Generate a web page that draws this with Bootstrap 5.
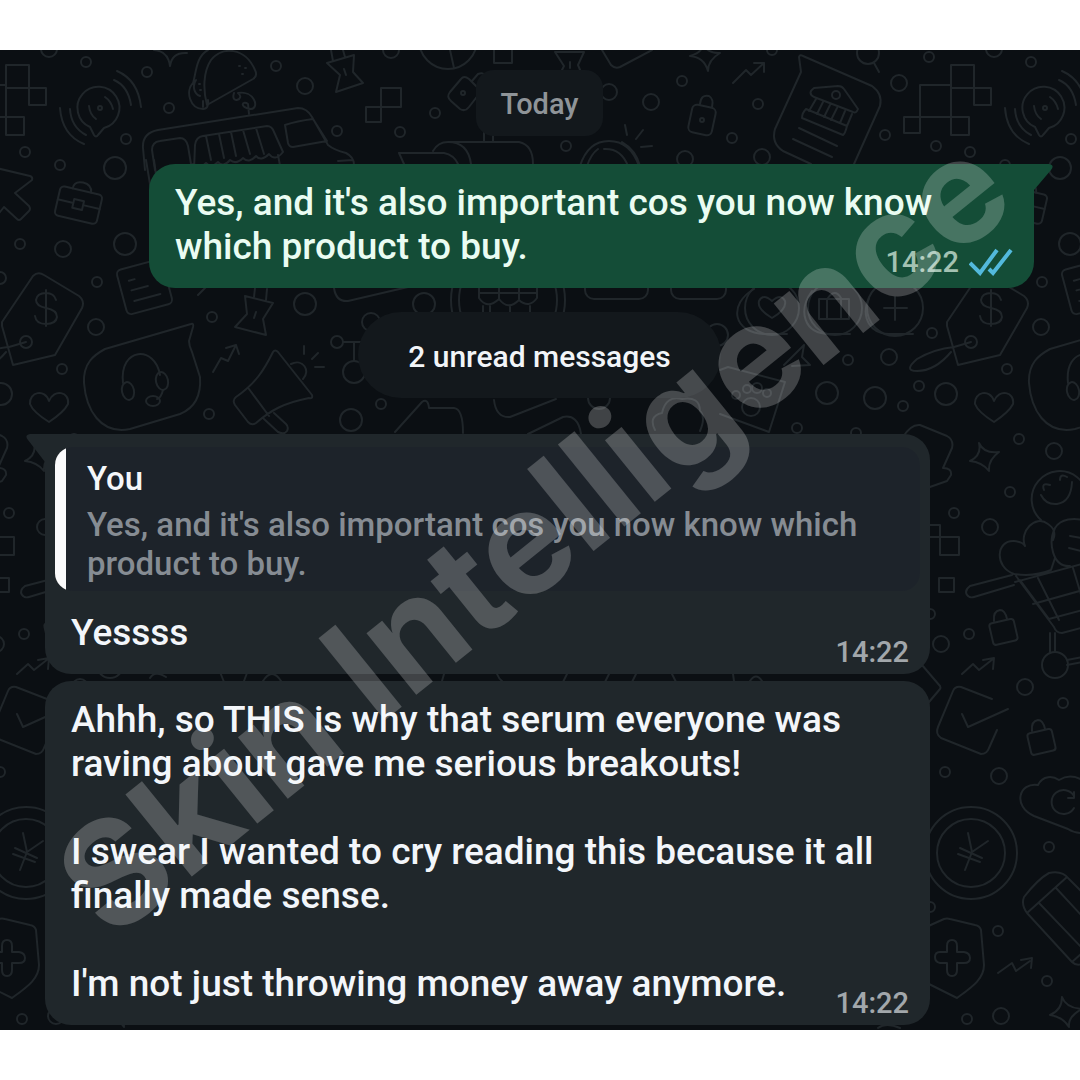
<!DOCTYPE html>
<html lang="en">
<head>
<meta charset="utf-8">
<meta name="viewport" content="width=device-width, initial-scale=1">
<title>Chat</title>
<link href="https://cdn.jsdelivr.net/npm/bootstrap@5.3.0/dist/css/bootstrap.min.css" rel="stylesheet">
<style>
body{background:#fff;font-family:Roboto,"Liberation Sans",sans-serif;font-weight:500}
.chat{background:#0b0f13;margin:50px 0;padding:20px 46px 5px 45px;overflow:hidden}
.wallpaper,.watermark{inset:0;width:100%;height:100%;pointer-events:none}
.wallpaper{fill:none;stroke:#20262a;stroke-width:2;stroke-linecap:round;stroke-linejoin:round}
.watermark text{font-family:Inter,sans-serif;font-weight:700;font-size:145px;fill:#fff;fill-opacity:.22}
.thread{z-index:1}
.day{background:#13181c;color:#8f9498;font-size:29px;line-height:32px;padding:18px 24px 16px;border-radius:18px;margin-bottom:28px}
.unread{background:#13181c;color:#f2f5f8;font-size:30px;line-height:36px;padding:27px 50px 23px;border-radius:43px;margin:24px 0 36px}
.bubble{width:calc(100% - 104px);border-radius:26px;color:#f3f6fa;font-size:37px;line-height:44px;background:#20272b}
.bubble p{margin:0 0 44px}
.bubble p:last-of-type{margin:0}
.bubble time{font-size:29px;line-height:32px;color:#a2a7ab;right:21px;bottom:6px}
.sent{background:#144d37;color:#eafcf2;padding:17px 26px 19px;border-top-right-radius:0}
.sent time{color:#a3c2b2;bottom:10px;gap:10px}
.quoted{padding:13px 10px 19px;border-top-left-radius:0;margin-bottom:7px}
.plain{padding:17px 26px 19px}
.tail{top:0;width:20px;height:34px}
.sent .tail{left:100%;fill:#144d37}
.quoted .tail{right:100%;fill:#20272b}
.quote{background:linear-gradient(to right,#fbfbfc 11px,#1d232a 11px);border-radius:18px;padding:11px 20px 7px 32px;color:#868c93;font-size:33px;line-height:39px;margin-bottom:20px;min-height:144px}
.quote strong{color:#f5f7fa;font-weight:500;line-height:42px;margin-bottom:5px}
.reply{padding:0 16px}
</style>
</head>
<body>
<main class="chat position-relative">
<svg class="wallpaper position-absolute" viewBox="0 50 1080 980" preserveAspectRatio="xMinYMin slice" aria-hidden="true">
<g id="doodles">
<g id="rings-small">
<circle cx="86" cy="62" r="5"/><circle cx="147" cy="72" r="5"/><circle cx="169" cy="108" r="5"/><circle cx="126" cy="139" r="5"/><circle cx="25" cy="152" r="5"/><circle cx="60" cy="165" r="5"/><circle cx="276" cy="66" r="5"/><circle cx="337" cy="131" r="5"/><circle cx="400" cy="132" r="5"/><circle cx="435" cy="113" r="5"/><circle cx="772" cy="50" r="5"/><circle cx="682" cy="81" r="5"/><circle cx="758" cy="104" r="5"/><circle cx="732" cy="138" r="5"/><circle cx="566" cy="146" r="5"/><circle cx="929" cy="57" r="5"/><circle cx="885" cy="135" r="5"/><circle cx="936" cy="146" r="5"/><circle cx="20" cy="244" r="5"/><circle cx="97" cy="282" r="5"/><circle cx="62" cy="369" r="5"/><circle cx="212" cy="317" r="5"/><circle cx="209" cy="414" r="5"/><circle cx="337" cy="342" r="6"/><circle cx="932" cy="333" r="5"/><circle cx="848" cy="360" r="5"/><circle cx="919" cy="386" r="5"/><circle cx="903" cy="406" r="5"/><circle cx="797" cy="428" r="5"/><circle cx="856" cy="433" r="5"/><circle cx="381" cy="404" r="5"/><circle cx="1019" cy="439" r="5"/><circle cx="1010" cy="492" r="5"/><circle cx="954" cy="513" r="5"/><circle cx="969" cy="634" r="5"/><circle cx="930" cy="614" r="5"/><circle cx="1063" cy="703" r="5"/><circle cx="945" cy="772" r="5"/><circle cx="1049" cy="847" r="5"/><circle cx="998" cy="931" r="5"/><circle cx="1047" cy="981" r="5"/><circle cx="967" cy="1019" r="5"/><circle cx="930" cy="907" r="5"/>
</g>
<g id="rings-large">
<circle cx="49" cy="49" r="8"/><circle cx="391" cy="50" r="8"/><circle cx="305" cy="86" r="8"/><circle cx="115" cy="168" r="11"/><circle cx="651" cy="102" r="8"/><circle cx="609" cy="92" r="8"/><circle cx="685" cy="159" r="8"/><circle cx="762" cy="157" r="8"/><circle cx="899" cy="83" r="8"/><circle cx="868" cy="53" r="11"/><circle cx="63" cy="249" r="8"/><circle cx="125" cy="244" r="11"/><circle cx="0" cy="278" r="6"/><circle cx="96" cy="327" r="8"/><circle cx="1" cy="394" r="11"/><circle cx="305" cy="304" r="11"/><circle cx="354" cy="372" r="11"/><circle cx="351" cy="420" r="11"/><circle cx="889" cy="357" r="8"/><circle cx="827" cy="393" r="11"/><circle cx="875" cy="398" r="11"/><circle cx="424" cy="304" r="11"/><circle cx="371" cy="322" r="9"/><circle cx="717" cy="335" r="11"/><circle cx="599" cy="398" r="11"/><circle cx="1054" cy="451" r="8"/><circle cx="990" cy="527" r="8"/><circle cx="941" cy="644" r="8"/><circle cx="1025" cy="687" r="8"/><circle cx="999" cy="776" r="8"/><circle cx="1001" cy="1016" r="8"/>
</g>
<!-- squares -->
<path d="M6 65h23v23H6zM29 88h17v17H29zM6 117h18v18H6zM-25 85H6v32h-31zM-41 117h16v16h-16zM381 88h20v19h-20zM366 107h15v15h-15zM494 45h18v18h-18zM940 537h19v18h-19zM921 525h19v12h-19zM939 578h15v14h-15z"/>
<!-- broadcast bubble -->
<path d="M90 127l4 8q2 3 4 0l6-7M90 127a21 21 0 1 1 14 1M89 106q1 9 7 13M105 97q6 4 8 12M117 71q21 9 24 36M114 80q14 6 17 25M60 108q2 27 24 36M70 109q1 18 16 26"/><circle cx="100" cy="108" r="2"/>
<!-- sparkle, taco, curl -->
<path d="M154 50q14 1 16 16 2-14 17-13M207 105l46-26q5-3 2-9C245 47 222 46 211 60c-8 12-8 30-4 45zM208 50c-12 6-12 24-15 33-8 8-3 26 10 26q6 0 5-9M196 80c-4 6-2 14 4 16M234 93c-4 12 12 6 4 0 16-3 22 15 13 16-13-2-8-9-3-5l1 10"/>
<path d="M239 66h1M245 68h1M242 74h1M203 101v6M199 84h1M200 90h1"/>
<!-- food truck -->
<path d="M145 170l-2-22q-1-15 15-18l140-22q9 0 14 9l16 28q6 5 18 8 8 4 8 12M155 170l-3-20q0-8 8-9l20-3q6 0 8 8l4 24M194 170l1-25q1-8 8-9l64-10q5 0 7 6l9 20q-8 10-14 2-8 8-13 2-7 8-13 2-7 7-13 2-7 8-12 2-7 7-12 1-7 8-13 1M206 136l5 24M219 134l5 24M231 132l5 24M243 130l7 24M256 128l8 26M278 155l3 16M285 125q12-4 28-6l14 22-34 6q-4 0-5-4zM338 161l15-1"/>
<!-- pushpins -->
<path d="M327 63l27-8-1 17 10 11-27 9 4-17zM331 50l2 11M343 50l2 7M344 69l2 6M555 52h29l-6 13 5 12M555 52l9 14-5 10M570 62v6M245 296l28 7-10 16 3 16-31-8 12-13zM255 288l-1 9M267 289l-1 11M256 312l-2 6"/>
<circle cx="448" cy="40" r="29"/><path d="M450 50l4 18"/>
<!-- key tag -->
<path d="M461 79l-11 13q-4 5 1 9l9 8q5 3 9-2l10-13M461 79q3-4 8 0l9 9M472 81l6-7q7-3 7 5l-6 8"/><circle cx="463" cy="93" r="2"/>
<!-- mailbox -->
<path d="M484 132v10M493 132v10M433 151q5-9 15-9h71q14 3 14 22M448 142q20 0 23 22M399 153h45q10 2 14 11M399 153l5 11"/>
<path d="M602 50l9 15q4 4 9 2l32-17M690 56q14-4 12-13 6 11 18 10-12 7-12 18-4-14-18-15zM733 83l13-13 5 5 13-12M754 63h10v9"/>
<!-- padlock -->
<rect x="690" y="106" width="24" height="28" rx="5" transform="rotate(12 702 120)"/><path d="M700 104q1-10 9-8 5 3 3 11"/><circle cx="702" cy="120" r="2"/>
<!-- lamp -->
<path d="M580 166q8-25 29-25t30 25M587 166q4-12 11-17M604 149q17-1 24 17M622 142q14 8 18 24M625 125l2 10M643 130l-7 9M641 147l11-1M874 63l5 9"/>
<!-- bank -->
<path d="M801 72l-2-15q1-3 4-1l69 30q11 8 8 20l-26 58M801 72l-26 57q-4 14 8 22l28 13M814 88l24-2q4 0 6 3l14 20q-2 5-5 3l-39-15q-7-4 0-9zM816 99l-7 12M823 102l-6 12M830 105l-6 12M837 108l-6 12M845 111l-5 12M852 114l-5 12M806 109l41 17q-2 8-4 9l-41-17q0-5 4-9zM799 128l38 18M793 139l39 18"/><circle cx="836" cy="95" r="4"/>
<!-- cursor and briefcase -->
<path d="M-8 167l38 9q3 1 2 4l-17 13 14 13q2 3 0 5l-8 8q-2 2-4 0L4 207l-8 10z"/>
<g transform="rotate(13 78 205)"><rect x="57" y="190" width="43" height="30" rx="4"/><path d="M69 190q0-8 9-8t10 8M57 204h15M84 204h16"/><rect x="73" y="200" width="10" height="9"/></g>
<path d="M146 160l5 30M154 160l4 30"/>
<!-- note -->
<g transform="rotate(-15 144 287)"><rect x="121" y="264" width="47" height="46" rx="5"/><path d="M131 277h6M131 287h17M131 298h27"/></g><path d="M198 295l9-9M334 288q2 14 14 13l60-14"/>
<!-- price tag -->
<path d="M2 322l31-46q5-5 11-1l35 21q6 5 3 12l-27 47-42 10L2 326zM46 290v36M56 300q-2-7-10-7-9 0-10 7 0 6 10 8 11 2 11 9-1 7-11 7-10 0-11-8M26 342l-17 5q-20 2-37 12-14 12 0 12 18 0 34-19"/><circle cx="26" cy="342" r="6"/>
<!-- headset bubble -->
<path d="M191 324q3-1 2 3l-4 14q0 5 3 11l8 25q2 28-20 37l-50 15c-30 6-44-20-46-46-1-20 10-28 21-34zM123 383c-4-36 32-38 37-8M163 390q-2 8-6 9"/><ellipse cx="128" cy="391" rx="6" ry="9" transform="rotate(-12 128 391)"/><ellipse cx="162" cy="381" rx="6" ry="9" transform="rotate(-12 162 381)"/><ellipse cx="153" cy="401" rx="7" ry="5"/>
<path d="M213 372l8-14 7 3 8-16M226 348l10-3 3 9M49 422q-16-10-19-18c-1-12 15-16 19-3 5-13 21-9 19 3q-4 8-19 18z"/>
<!-- megaphone -->
<path d="M273 352q2-3 5 0l34 43q1 4-3 3c-25 5-38 12-53 25q-4 3-8-1l-13-17q-3-5 1-8c20-14 28-27 37-45zM249 389l20 27M291 364c12-6 20 7 12 15M264 419l14 13q6 3 9-1 2-4-1-7l-12-11M304 346v8M318 353l-6 6M315 367h9M343 342h20M354 342v19"/>
<!-- badges -->
<circle cx="508" cy="300" r="57"/><circle cx="508" cy="300" r="49"/><path d="M479 285v13q8 12 20 1 9 12 20 1 10 9 18-2v-13M479 293h58M499 285v14M519 285v14M483 306v20M490 306v16M510 306v16M530 306v16"/>
<rect x="585" y="274" width="63" height="25" rx="9"/><rect x="671" y="274" width="55" height="25" rx="9"/>
<g><circle cx="772" cy="308" r="27"/><circle cx="835" cy="308" r="27"/><circle cx="895" cy="308" r="28"/><path d="M754 289c-26 15-22 45 13 45h20M812 291c-14 19-9 43 18 43h20M869 298c-9 20 2 36 20 36h24M772 318q-15-9-13-17 4-8 13 0 9-8 13 0 2 8-13 17zM819 299h30v20h-30zM827 299v20M841 299v20M828 298q7-10 13 0M895 297v23M884 308h23"/></g>
<!-- photo card -->
<path d="M720 370l8-3 57 15-16 50-49-18M784 365l20-20-2 12 8 8-18 1"/><circle cx="751" cy="407" r="9"/><circle cx="747" cy="389" r="4"/><circle cx="757" cy="388" r="5"/><circle cx="767" cy="393" r="4"/><circle cx="736" cy="395" r="4"/>
<path d="M395 432l27-30q6-4 7 6h25q9 1 9 25M494 400q2 18 16 17l46-18M528 434l35-17q15-3 18 17M655 430q-7-14 7-17 4-18 20-14 18-3 18 12 6 6 0 20M903 437q8-13 17-12l27 11q7 4 5 12l-9 20q9 0 8 7l-4 6-20 7"/>
<!-- sparkle, smiley, hearts and cart -->
<path d="M979 443q5 11 20 9-11 8-10 19-7-9-19-10 12-6 9-18zM1062 997q4 11 20 12-14 7-13 18-6-10-19-12 12-5 12-18M1041 520a28 28 0 1 1 41-4M1041 495q5 10 16 9 14-2 15-22M1044 490q-3-8 6-5M1060 480q0-7 7-3"/>
<path d="M1014 574c-20-7-18-34 0-33q9 1 11 5c-6-14 10-32 23-22 6 4 8 10 5 16M1014 574q20 3 37-4l4-12M1070 566c-18 1-22-24-15-38 6-10 20-10 27-8M1070 536l12 2M1069 548l12 3M1016 576l38 51q2 6 8 6l34-9M1020 580l29 39 34-9M1015 582l67-18M1033 604l50-14M1038 578l21 42M1073 568l9 30M1012 575l-42 11c-8 6-2 13 4 11l40-12M1050 633v20M1055 633v19M1067 660l20-4M1067 665l20-4"/><circle cx="1055" cy="665" r="13"/>
<g id="bag"><rect x="991" y="621" width="25" height="22" rx="3" transform="rotate(-13 1003 632)"/><path d="M994 621q-1-10 6-11 5 0 7 9"/></g><use href="#bag" x="38" y="110"/>
<path d="M962 674l11-10 6 6 14-11M983 660l11-2-1 11M922 665l18 21q1 2 0 3l-11 13M992 699l-31-12q-6-1-8 4l-15 36q-3 7 3 11l40 16q6 0 8-6l8-18M962 714l6 13 40-18"/>
<!-- coin, cloud, shield, pencil -->
<circle cx="971" cy="853" r="46"/><circle cx="971" cy="853" r="34"/><path d="M968 833l4 19 16-11M972 852l-7 18M960 848l22 10M958 854l22 8"/>
<path d="M1082 833q-8 0-14-4l-34-13c-22-10-15-34 4-31 5-10 15-9 21-5 8-5 16-4 23 0M1074 796a12 12 0 1 0 0 12M1068 798h6v-6"/>
<path d="M924 928l20-9q3-1 6 0l25 6q5 1 6 5l3 35c0 14-12 22-27 33l-30-15M947 946q0-6 5-6t5 6v6h7q6 1 6 6t-6 5h-7v7q0 6-5 6t-5-6v-7h-7q-5-1-5-6t5-5h7z"/>
<path d="M998 973l14-10 4 8 14-10M1021 960l11-2-1 10M1027 913q-6-8-3-16 14-18 25-24 13-3 20 6l16 16M1027 913l40-36M1027 913l45 49q4 4 10 2M1039 903l43 45M1056 888l26 28M1072 962l10-9M878 1028q8-6 22 0"/>
<path d="M150 678q5-8 16-1M220 672l4 10M244 681l3-8M263 681q9-14 18 0M442 681l2-7M497 674q2 5 5 7M567 674l-4 8M609 674l-4 8M632 682l4-8M672 674l4 8M733 674l1 7M750 681q6-9 12 0"/>
</g>
<use href="#doodles" x="-945"/><use href="#doodles" x="945"/>
</svg>

<div class="thread position-relative d-flex flex-column align-items-center">
<div class="day">Today</div>
<article class="bubble sent position-relative align-self-end">
<svg class="tail position-absolute" viewBox="0 0 20 34" aria-hidden="true"><path d="M-1 0H15Q21 1 17 6L0 26V34H-1z"/></svg>
<p>Yes, and it's also important cos you now know which product to buy.</p>
<time class="position-absolute d-flex align-items-center">14:22
<svg width="44" height="28" viewBox="0 0 44 28" fill="none" stroke="#53b9dc" stroke-width="4" role="img" aria-label="Read"><path d="M1 15L11 25 28 2M20 21L24 25 42 2"/></svg></time>
</article>
<div class="unread">2 unread messages</div>
<article class="bubble quoted position-relative align-self-start">
<svg class="tail position-absolute" viewBox="0 0 20 34" aria-hidden="true"><path d="M21 0H5Q-1 1 3 6L20 28V34H21z"/></svg>
<blockquote class="quote"><strong class="d-block">You</strong>Yes, and it's also important cos you now know which product to buy.</blockquote>
<p class="reply">Yessss</p>
<time class="position-absolute">14:22</time>
</article>
<article class="bubble plain position-relative align-self-start">
<p>Ahhh, so THIS is why that serum everyone was raving about gave me serious breakouts!</p>
<p>I swear I wanted to cry reading this because it all finally made sense.</p>
<p>I'm not just throwing money away anymore.</p>
<time class="position-absolute">14:22</time>
</article>
</div>
<svg class="watermark position-absolute z-2" viewBox="0 50 1080 980" preserveAspectRatio="xMinYMin slice"><text transform="translate(111 942) rotate(-39)">Skin Intelligence</text></svg>
</main>
<script src="https://cdn.jsdelivr.net/npm/bootstrap@5.3.0/dist/js/bootstrap.bundle.min.js"></script>
</body>
</html>
